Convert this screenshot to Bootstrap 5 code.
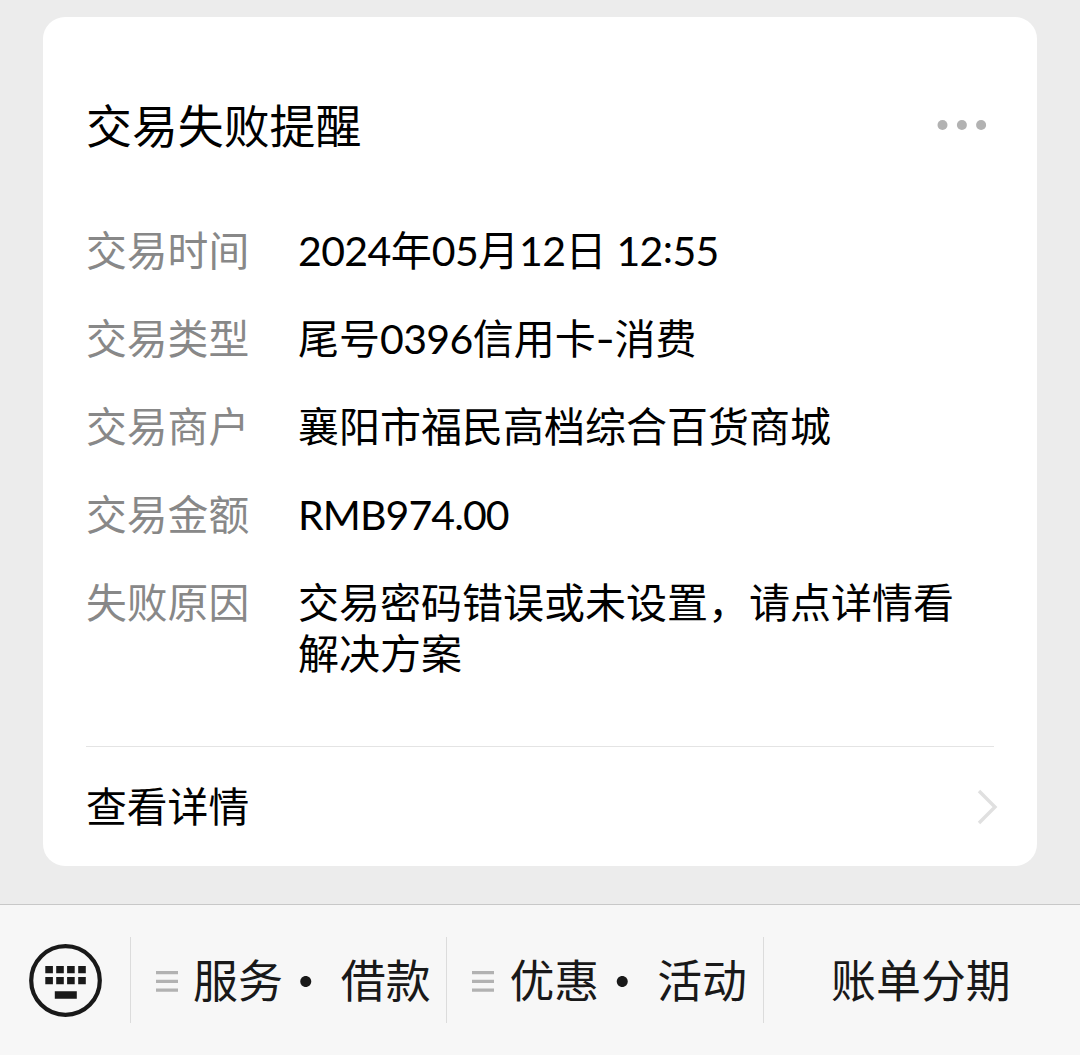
<!DOCTYPE html>
<html lang="zh-CN">
<head>
<meta charset="utf-8">
<meta name="viewport" content="width=device-width, initial-scale=1">
<title>交易失败提醒</title>
<link rel="stylesheet" href="https://cdn.jsdelivr.net/npm/bootstrap@5.3.0/dist/css/bootstrap.min.css">
<style>
  body { background: #ececec; color: #000; font-family: "Noto Sans CJK SC", sans-serif; font-size: 41px; line-height: 52px; height: 1055px; overflow: hidden; }
  .notice { margin: 17px 43px 0; height: 849px; border-radius: 22px; padding: 80px 43px 0; }
  .notice-title { font-size: 45.9px; font-weight: 400; line-height: 52px; padding-bottom: 4px; }
  .fields { margin-top: 70px; gap: 36px; }
  .field-name { width: 212px; color: #888; font-size: 40.8px; }
  .field-value { font-size: 41px; width: 680px; margin-top: -1px; }
  .field-value.detail-text { margin-top: 0; line-height: 51px; }
  .latin { font-family: Lato, sans-serif; line-height: 1; letter-spacing: -.6px; }
  .amount { letter-spacing: -.9px; }
  .dash { font-family: Inter, sans-serif; line-height: 1; }
  .colon { position: relative; top: -3px; }
  .more-link { margin-top: 69px; border-top: 1px solid #e4e4e4; height: 120px; width: 908px; color: #000; font-size: 40.8px; }
  .more-link span { padding-bottom: 4px; }
  .chevron { margin-right: -4px; }
  .menu-bar { height: 151px; background: #f7f7f7; border-top: 1px solid #c8c8c8; color: #191919; font-size: 44.9px; }
  .kbd-cell { width: 130px; padding-left: 28px; }
  .menu-cell { height: 86px; border-left: 1px solid #dcdcdc; white-space: nowrap; }
  .menu-cell > span { padding-bottom: 3px; }
  .menu-sub { width: 316.4px; padding-left: 25px; }
  .lines { margin: 3px 15px 0 0; }
  .menu-cell > .bullet { width: 56px; margin: 0 7px 0 -5px; text-align: center; line-height: 1; font-size: 52px; padding-bottom: 3px; }
  .menu-last { padding-right: 2px; }
</style>
<script src="https://cdn.jsdelivr.net/npm/bootstrap@5.3.0/dist/js/bootstrap.bundle.min.js"></script>
</head>
<body class="d-flex flex-column justify-content-between">
<main class="notice bg-white">
  <header class="d-flex justify-content-between align-items-center">
    <h1 class="notice-title m-0">交易失败提醒</h1>
    <svg class="me-1" width="54" height="12" viewBox="0 0 54 12" fill="#b2b2b2"><circle cx="6.5" cy="6" r="5"/><circle cx="25.9" cy="6" r="5"/><circle cx="45.1" cy="6" r="5"/></svg>
  </header>
  <section class="fields d-flex flex-column">
    <div class="d-flex"><div class="field-name">交易时间</div><div class="field-value"><span class="latin">2024</span>年<span class="latin">05</span>月<span class="latin">12</span>日<span class="latin"> 12<span class="colon">:</span>55</span></div></div>
    <div class="d-flex"><div class="field-name">交易类型</div><div class="field-value">尾号<span class="latin">0396</span>信用卡<span class="dash">-</span>消费</div></div>
    <div class="d-flex"><div class="field-name">交易商户</div><div class="field-value">襄阳市福民高档综合百货商城</div></div>
    <div class="d-flex"><div class="field-name">交易金额</div><div class="field-value"><span class="latin amount">RMB974.00</span></div></div>
    <div class="d-flex"><div class="field-name">失败原因</div><div class="field-value detail-text">交易密码错误或未设置，请点详情看解决方案</div></div>
  </section>
  <a href="#" class="more-link d-flex justify-content-between align-items-center text-decoration-none">
    <span>查看详情</span>
    <svg class="chevron" width="22" height="38" viewBox="0 0 22 38" fill="none" stroke="#e0e0e0" stroke-width="3.4"><path d="M3 3 19 19 3 35"/></svg>
  </a>
</main>
<nav class="menu-bar d-flex align-items-center">
  <div class="kbd-cell d-flex">
    <svg width="75" height="75" viewBox="0 0 75 75" fill="#191919"><circle cx="37.5" cy="37.5" r="34.3" fill="none" stroke="#191919" stroke-width="4.2"/><path d="M17.3 23h7.6v7.2h-7.6zM28.2 23h7.6v7.2h-7.6zM39.1 23h7.6v7.2h-7.6zM50.2 23h7.6v7.2h-7.6zM17.3 34h7.6v7.2h-7.6zM28.2 34h7.6v7.2h-7.6zM39.1 34h7.6v7.2h-7.6zM50.2 34h7.6v7.2h-7.6zM26.8 48.3h22v7.5h-22z"/></svg>
  </div>
  <div class="menu-cell menu-sub d-flex align-items-center">
    <svg class="lines" width="22" height="22" viewBox="0 0 22 22" fill="#b2b2b2"><path d="M0 0h22v3.3H0zM0 8.8h22v3.3H0zM0 17.4h22v3.3H0z"/></svg>
    <span>服务</span><span class="bullet">•</span><span>借款</span>
  </div>
  <div class="menu-cell menu-sub d-flex align-items-center">
    <svg class="lines" width="22" height="22" viewBox="0 0 22 22" fill="#b2b2b2"><path d="M0 0h22v3.3H0zM0 8.8h22v3.3H0zM0 17.4h22v3.3H0z"/></svg>
    <span>优惠</span><span class="bullet">•</span><span>活动</span>
  </div>
  <div class="menu-cell menu-last flex-fill d-flex align-items-center justify-content-center"><span>账单分期</span></div>
</nav>
</body>
</html>
